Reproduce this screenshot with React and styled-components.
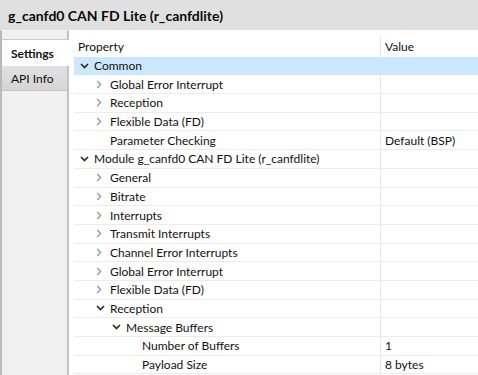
import { Fragment } from "react";
import styled, { createGlobalStyle } from "styled-components";

const GlobalStyle = createGlobalStyle`
  html, body {
    margin: 0;
    padding: 0;
    background: #ffffff;
  }
  * {
    box-sizing: border-box;
  }
`;

const Window = styled.div`
  width: 478px;
  height: 375px;
  overflow: hidden;
  display: flex;
  flex-direction: column;
  font-family: "Segoe UI", Lato, "Noto Sans", sans-serif;
  font-size: 12px;
  color: #111111;
  background: #ffffff;
`;

const TitleBar = styled.div`
  height: 30px;
  flex: none;
  display: flex;
  align-items: center;
  padding-left: 8px;
  background: #e0e0e0;
  font-size: 14px;
  font-weight: 700;
  color: #0a0a0a;
  white-space: nowrap;
`;

const Body = styled.div`
  flex: 1;
  display: flex;
  min-height: 0;
`;

const Sidebar = styled.div`
  width: 69px;
  flex: none;
  display: flex;
  flex-direction: column;
  padding-top: 8px;
  background: #f0f0f0;
  border-left: 2px solid #b9b9b9;
  border-right: 2px solid #c4c4c4;
  border-top: 1px solid #f7f7f7;
`;

const Tab = styled.div`
  height: ${({ $active }) => ($active ? "27px" : "25px")};
  display: flex;
  align-items: center;
  padding-left: 9px;
  font-weight: ${({ $active }) => ($active ? 700 : 400)};
  background: ${({ $active }) =>
    $active ? "#ffffff" : "linear-gradient(#e2e2e2, #d4d4d4)"};
  border-top: ${({ $active }) => ($active ? "1px solid #c8c8c8" : "none")};
  border-bottom: ${({ $active }) => ($active ? "none" : "1px solid #c4c4c4")};
  margin-right: ${({ $active }) => ($active ? "-2px" : "0")};
  position: relative;
`;

const Content = styled.div`
  flex: 1;
  padding: 6px 0 0 5px;
  overflow: hidden;
`;

const Table = styled.div`
  display: grid;
  grid-template-columns: 306px 1fr;
`;

const HeaderCell = styled.div`
  height: 20.7px;
  display: flex;
  align-items: center;
  padding-left: 4px;
  border-left: ${({ $divider }) => ($divider ? "1px solid #e6e6e6" : "none")};
`;

const Cell = styled.div`
  height: 18.7px;
  display: flex;
  align-items: center;
  white-space: nowrap;
  padding-left: ${({ $indent }) => $indent}px;
  background: ${({ $selected }) => ($selected ? "#cce8ff" : "#ffffff")};
  border-bottom: 1px solid ${({ $selected }) => ($selected ? "#cce8ff" : "#ececec")};
  border-left: ${({ $divider, $selected }) =>
    $divider ? `1px solid ${$selected ? "#cce8ff" : "#e6e6e6"}` : "none"};
`;

const Toggle = styled.span`
  width: 16px;
  flex: none;
  display: flex;
  align-items: center;
  justify-content: flex-start;
  padding-left: 2px;
`;

const ChevronDown = () => (
  <svg width="9" height="6" viewBox="0 0 9 6">
    <path d="M1 1 L4.5 4.5 L8 1" fill="none" stroke="#2b2b2b" strokeWidth="1.7" />
  </svg>
);

const ChevronRight = () => (
  <svg width="6" height="9" viewBox="0 0 6 9">
    <path d="M1.2 1 L4.6 4.5 L1.2 8" fill="none" stroke="#9a9a9a" strokeWidth="1.4" />
  </svg>
);

const rows = [
  { label: "Common", level: 0, state: "open", selected: true },
  { label: "Global Error Interrupt", level: 1, state: "closed" },
  { label: "Reception", level: 1, state: "closed" },
  { label: "Flexible Data (FD)", level: 1, state: "closed" },
  { label: "Parameter Checking", level: 1, value: "Default (BSP)" },
  { label: "Module g_canfd0 CAN FD Lite (r_canfdlite)", level: 0, state: "open" },
  { label: "General", level: 1, state: "closed" },
  { label: "Bitrate", level: 1, state: "closed" },
  { label: "Interrupts", level: 1, state: "closed" },
  { label: "Transmit Interrupts", level: 1, state: "closed" },
  { label: "Channel Error Interrupts", level: 1, state: "closed" },
  { label: "Global Error Interrupt", level: 1, state: "closed" },
  { label: "Flexible Data (FD)", level: 1, state: "closed" },
  { label: "Reception", level: 1, state: "open" },
  { label: "Message Buffers", level: 2, state: "open" },
  { label: "Number of Buffers", level: 3, value: "1" },
  { label: "Payload Size", level: 3, value: "8 bytes" },
];

export default function App() {
  return (
    <Window>
      <GlobalStyle />
      <TitleBar>g_canfd0 CAN FD Lite (r_canfdlite)</TitleBar>
      <Body>
        <Sidebar>
          <Tab $active>Settings</Tab>
          <Tab>API Info</Tab>
        </Sidebar>
        <Content>
          <Table>
            <HeaderCell>Property</HeaderCell>
            <HeaderCell $divider>Value</HeaderCell>
            {rows.map((row, i) => (
              <Fragment key={i}>
                <Cell $indent={4 + row.level * 16} $selected={row.selected}>
                  <Toggle>
                    {row.state === "open" && <ChevronDown />}
                    {row.state === "closed" && <ChevronRight />}
                  </Toggle>
                  {row.label}
                </Cell>
                <Cell $indent={4} $divider $selected={row.selected}>
                  {row.value}
                </Cell>
              </Fragment>
            ))}
          </Table>
        </Content>
      </Body>
    </Window>
  );
}
